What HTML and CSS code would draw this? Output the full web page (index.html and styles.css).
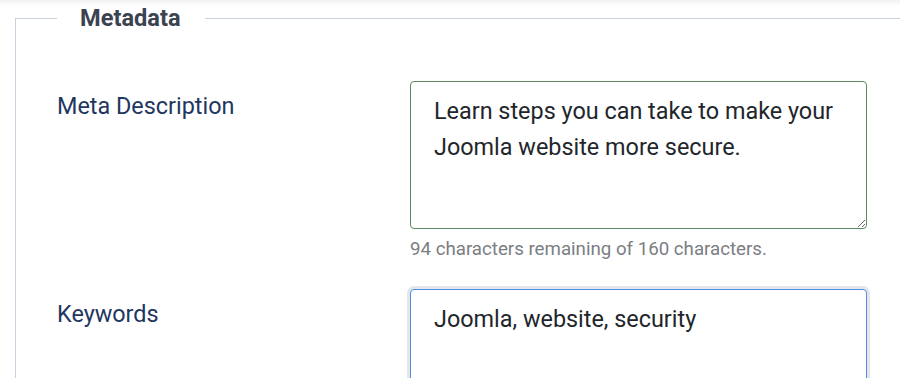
FILE: index.html
```html
<!DOCTYPE html>
<html lang="en">
<head>
  <meta charset="UTF-8" />
  <meta name="viewport" content="width=device-width, initial-scale=1.0"/>
  <title>Metadata</title>
  <link rel="stylesheet" href="styles.css">
</head>
<body>
<div class="topbar"></div>
<fieldset class="options">
  <legend>Metadata</legend>

  <div class="control-group">
    <label for="metadesc" class="control-label">Meta Description</label>
    <div class="controls">
      <textarea id="metadesc" class="form-control valid" rows="3">Learn steps you can take to make your Joomla website more secure.</textarea>
      <div class="char-counter">94 characters remaining of 160 characters.</div>
    </div>
  </div>

  <div class="control-group">
    <label for="metakey" class="control-label">Keywords</label>
    <div class="controls">
      <textarea id="metakey" class="form-control active" rows="3" autofocus>Joomla, website, security</textarea>
    </div>
  </div>
</fieldset>

<script src="script.js"></script>
</body>
</html>
```

FILE: styles.css
```css
body {
  margin: 0;
  background-color: #fff;
  font-family: Roboto, "Noto Sans", sans-serif;
  overflow: hidden;
}

.topbar {
  height: 6px;
  background: linear-gradient(#f1f1f1, #fff);
}

.options {
  margin: 0 0 0 15px;
  padding: 0 0 0 41px;
  border: 1px solid #c9d1df;
  border-right: none;
  border-bottom: none;
  min-height: 400px;
}

.options legend {
  padding: 0 24px 0 23px;
  font-size: 23.6px;
  line-height: 24px;
  font-weight: 700;
  color: #3c4350;
}

.control-group {
  display: flex;
  margin-bottom: 28px;
}

.control-group:first-of-type {
  margin-top: 51px;
}

.control-label {
  width: 353px;
  flex-shrink: 0;
  padding-top: 10px;
  font-size: 23.4px;
  line-height: 30px;
  color: #1f3760;
}

.controls {
  width: 457px;
}

.form-control {
  display: block;
  width: 100%;
  height: 148px;
  box-sizing: border-box;
  margin: 0;
  padding: 11px 23px;
  font-family: Roboto, "Noto Sans", sans-serif;
  font-size: 23.4px;
  line-height: 36px;
  color: #22262b;
  background: #fff;
  border: 1px solid #b7c0cf;
  border-radius: 4px;
  resize: vertical;
  outline: none;
}

.form-control.valid {
  border-color: #5c8a61;
}

.form-control.active {
  border-color: #4d8fe6;
  box-shadow: 0 0 0 3px #e4e6e9;
  caret-color: #22262b;
}

.char-counter {
  margin-top: 8px;
  font-size: 18.7px;
  line-height: 24px;
  color: #7b7e83;
}
```

FILE: script.js
```js
const keywords = document.getElementById('metakey');
keywords.focus();
keywords.setSelectionRange(keywords.value.length, keywords.value.length);
```
